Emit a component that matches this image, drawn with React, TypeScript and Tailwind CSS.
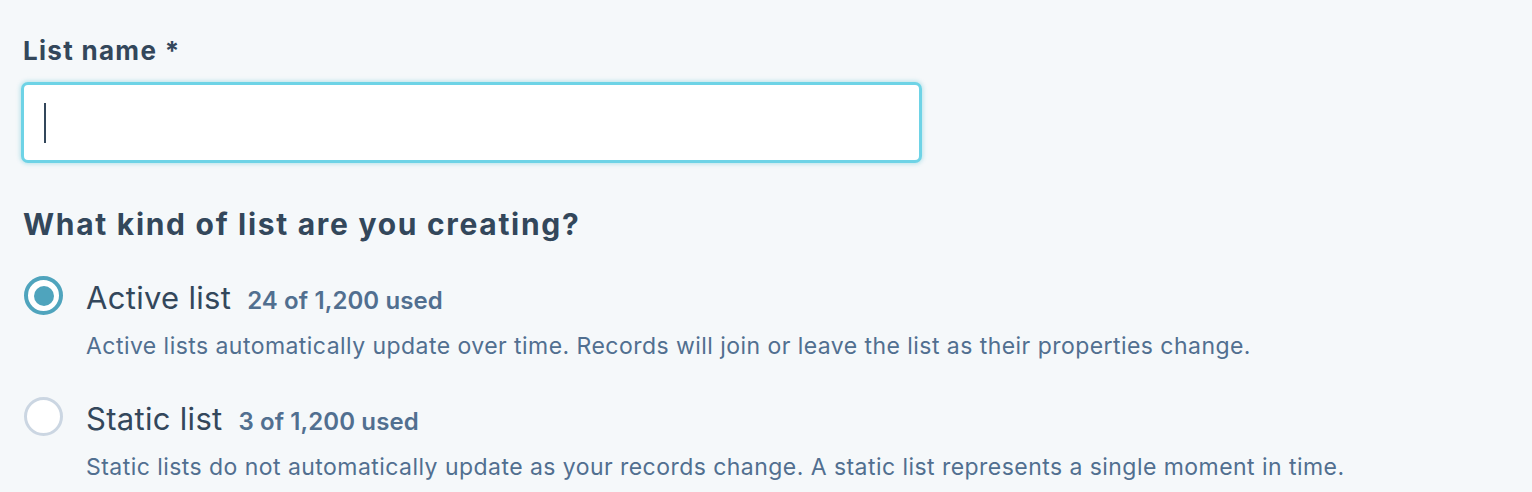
import React from 'react';

const font = { fontFamily: 'Inter, "Noto Sans", sans-serif' };

function Radio({ checked }: { checked: boolean }) {
  return checked ? (
    <span className="flex h-[39px] w-[39px] shrink-0 items-center justify-center rounded-full border-[4px] border-[#4fa4bd] bg-white">
      <span className="h-[20px] w-[20px] rounded-full bg-[#4fa4bd]" />
    </span>
  ) : (
    <span className="h-[39px] w-[39px] shrink-0 rounded-full border-[3px] border-[#cbd6e2] bg-white" />
  );
}

function Option({
  checked,
  label,
  usage,
  desc,
}: {
  checked: boolean;
  label: string;
  usage: string;
  desc: string;
}) {
  return (
    <div className="flex gap-[23px]">
      <Radio checked={checked} />
      <div className="flex flex-col">
        <div className="flex items-baseline gap-[16px] leading-[44px]">
          <span className="text-[31px] tracking-[0.3px] text-[#33475b]">{label}</span>
          <span className="text-[24px] font-semibold tracking-[0.1px] text-[#516f90]">{usage}</span>
        </div>
        <p className="mt-[10px] text-[23px] leading-[26px] tracking-[0.45px] text-[#516f90]">{desc}</p>
      </div>
    </div>
  );
}

export default function App() {
  return (
    <div style={font} className="h-[492px] w-[1532px] overflow-hidden bg-[#f5f8fa] px-[21px] pt-[35px]">
      <label className="block pl-[2px] text-[26px] font-bold leading-[32px] tracking-[1.3px] text-[#33475b]">
        List name *
      </label>
      <div className="mt-[15px] flex h-[81px] w-[901px] items-center rounded-[7px] border-[3px] border-[#6ed3e6] bg-white px-[20px] shadow-[0_0_4px_1px_rgba(0,164,189,0.25)]">
        <span className="h-[40px] w-[2px] bg-[#33475b]" />
      </div>
      <h2 className="mt-[43px] pl-[2px] text-[30px] font-bold leading-[36px] tracking-[1.7px] text-[#33475b]">
        What kind of list are you creating?
      </h2>
      <div className="mt-[34px] flex flex-col gap-[38px] pl-[3px]">
        <Option
          checked
          label="Active list"
          usage="24 of 1,200 used"
          desc="Active lists automatically update over time. Records will join or leave the list as their properties change."
        />
        <Option
          checked={false}
          label="Static list"
          usage="3 of 1,200 used"
          desc="Static lists do not automatically update as your records change. A static list represents a single moment in time."
        />
      </div>
    </div>
  );
}
